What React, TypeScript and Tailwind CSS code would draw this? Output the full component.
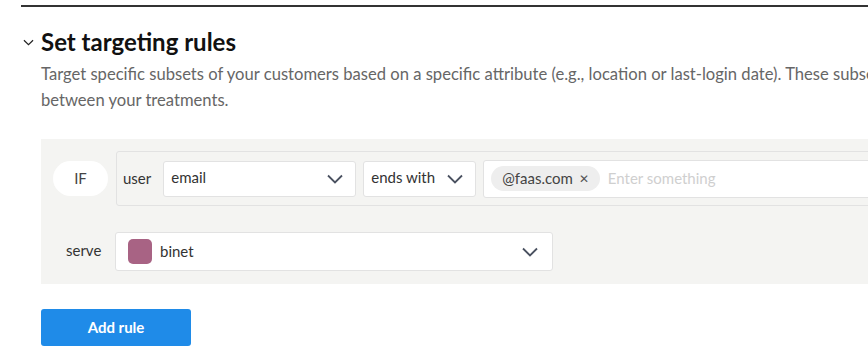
import React, { useState } from 'react';

const font = { fontFamily: '"Lato", "Liberation Sans", sans-serif' };

const Chevron = ({ className }: { className?: string }) => (
  <svg viewBox="0 0 20 20" className={className} fill="none" stroke="currentColor" strokeWidth="1.8">
    <path d="M3 6.5 L10 13.5 L17 6.5" />
  </svg>
);

const SelectBox = ({ label, className }: { label: string; className: string }) => (
  <div className={`flex items-center justify-between bg-white border border-[#e2e2e2] rounded-[3px] h-[36px] pl-[7px] pr-[10px] ${className}`}>
    <span className="text-[15px] text-[#333] -mt-[3px]">{label}</span>
    <Chevron className="w-[20px] h-[20px] text-[#4a5160]" />
  </div>
);

const App: React.FC = () => {
  const [chips, setChips] = useState<string[]>(['@faas.com']);

  return (
    <div className="w-[868px] h-[363px] overflow-hidden bg-white" style={font}>
      <div className="w-[1100px] pl-[21px] pt-[5px]">
        <div className="border-t-[2px] border-[#333]" />

        {/* header */}
        <div className="flex items-center mt-[20px]">
          <Chevron className="w-[13px] h-[13px] text-[#222] ml-[1px] mr-[6px]" />
          <h2 className="text-[24px] font-bold text-[#111] leading-[30px]">Set targeting rules</h2>
        </div>
        <p className="ml-[20px] mt-[4px] text-[16.6px] leading-[26px] text-[#666] whitespace-nowrap">
          Target specific subsets of your customers based on a specific attribute (e.g., location or last-login date). These subsets are then distributed
          <br />
          between your treatments.
        </p>

        {/* rules panel */}
        <div className="ml-[20px] mt-[26px] bg-[#f4f4f2] pt-[12px] pb-[13px] pl-[12px]">
          <div className="flex items-center">
            <div className="w-[55px] h-[35px] rounded-full bg-white flex items-center justify-center text-[15px] text-[#444] mr-[8px]">
              IF
            </div>
            <div className="flex items-center flex-1 border border-[#e2e2e2] rounded-[3px] h-[55px] pl-[6px]">
              <span className="text-[15px] text-[#333] mr-[12px]">user</span>
              <SelectBox label="email" className="w-[193px]" />
              <SelectBox label="ends with" className="w-[113px] ml-[7px]" />
              <div className="flex items-center flex-1 bg-white border border-[#e2e2e2] rounded-[3px] h-[38px] ml-[7px] pl-[7px]">
                {chips.map((c) => (
                  <span key={c} className="flex items-center h-[25px] rounded-full bg-[#eeeeee] px-[11px] text-[15px] text-[#444] mr-[8px]">
                    {c}
                    <button
                      onClick={() => setChips(chips.filter((x) => x !== c))}
                      className="ml-[6px] text-[12px] text-[#555] leading-none"
                    >
                      ✕
                    </button>
                  </span>
                ))}
                <input
                  placeholder="Enter something"
                  className="flex-1 outline-none text-[15px] placeholder:text-[#cfcfcf] bg-transparent"
                  style={font}
                />
              </div>
            </div>
          </div>

          <div className="flex items-center mt-[26px]">
            <span className="w-[62px] pl-[13px] text-[15px] text-[#333] -mt-[3px]">serve</span>
            <div className="flex items-center justify-between bg-white border border-[#e2e2e2] rounded-[3px] h-[39px] w-[438px] pl-[12px] pr-[12px]">
              <div className="flex items-center">
                <span className="w-[24px] h-[25px] rounded-[5px] bg-[#a86384] mr-[8px]" />
                <span className="text-[15px] text-[#333]">binet</span>
              </div>
              <Chevron className="w-[20px] h-[20px] text-[#4a5160]" />
            </div>
          </div>
        </div>

        <button className="ml-[20px] mt-[25px] w-[150px] h-[37px] rounded-[3px] bg-[#1f8be8] text-white text-[15px] font-bold">
          Add rule
        </button>
      </div>
    </div>
  );
};

export default App;
